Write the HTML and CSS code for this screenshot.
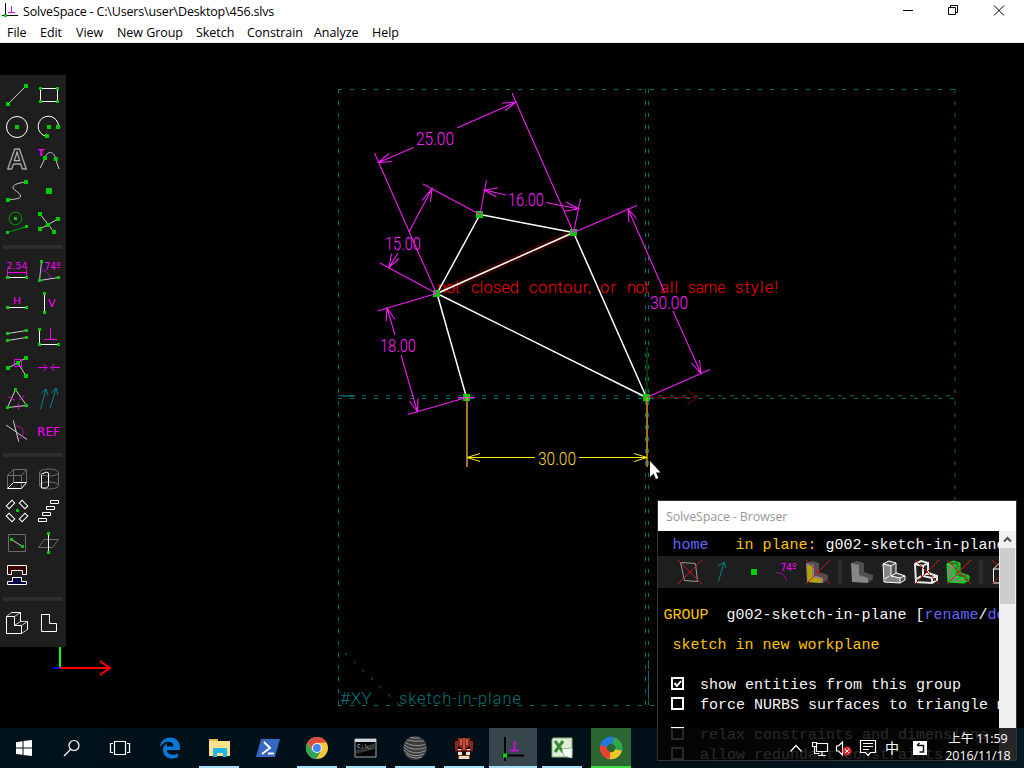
FILE: index.html
```html
<!DOCTYPE html>
<html lang="en">
<head>
<meta charset="utf-8">
<title>SolveSpace</title>
<link rel="stylesheet" href="styles.css">
</head>
<body>
<svg class="defs" width="0" height="0">
  <defs>
    <rect id="p" x="-1.5" y="-1.5" width="3" height="3" fill="#00cc00"/>
    <rect id="q" x="-2" y="-2" width="4" height="4" fill="#00cc00"/>
    <rect id="b" x="-3" y="-3" width="6" height="6" fill="#00cc00"/>
    <g id="solid">
      <path fill="#505050" d="M5 7l6-2 7 2v10l-5 2v-9zM13 19l5-3 9 3v4l-5 4v-4z"/>
      <path fill="#858585" d="M5 7l8 2v10l9 3v5l-16-1z"/>
    </g>
    <g id="edges" fill="none">
      <path d="M5 8l6-3 7 2v10l9 3v4l-5 3-16-1zM5 8l8 2v10l9 2v5M13 10l5-3M13 20l5-3M22 22l5-2M7 23l4-3"/>
    </g>
    <path id="x" d="M5 4l24 24M29 4l-24 24" stroke="#d41414" fill="none"/>
  </defs>
</svg>
<div class="screen">
  <header class="titlebar">
    <svg class="appicon" width="20" height="22" viewBox="0 0 20 22"><path d="M5.500 3v14M2 15.500h16" stroke="#000" fill="none"/><path d="M8 12.500h7M11.500 6v6" stroke="#e000e0" fill="none"/><rect x="4" y="14" width="3" height="3" fill="#00cc00"/></svg>
    <span class="title">SolveSpace - C:\Users\user\Desktop\456.slvs</span>
    <svg class="controls" width="124" height="22" viewBox="900 0 124 22"><path d="M903 10.500h10M948.500 7.500h7v7h-7zM950.500 7v-1.500h7v7h-1.500M994 5.500l10 10M1004 5.500l-10 10" fill="none" stroke="#000"/></svg>
  </header>
  <nav class="menubar">
    <span class="m1">File</span><span class="m2">Edit</span><span class="m3">View</span><span class="m4">New Group</span><span class="m5">Sketch</span><span class="m6">Constrain</span><span class="m7">Analyze</span><span class="m8">Help</span>
  </nav>
  <main class="work">
    <svg class="canvas" width="1024" height="685" viewBox="0 43 1024 685">
      <g class="plane">
        <path d="M338.500 89v617M645.500 89v617M648.500 89v617M955 89v617" stroke-dasharray="4 8"/>
        <path d="M338 89.500h617M338 705.500h617M338 395.800h308M338 398.500h617M646 395.800h309" stroke-dasharray="4 8"/>
        <path d="M345 653l54 52" stroke-dasharray="3 9"/>
        <path d="M342 396h13" stroke-width="1.500"/>
        <path d="M648.500 660v42" stroke-dasharray="7 4"/>
      </g>
      <g class="planetext">
        <text x="340" y="704" textLength="32" lengthAdjust="spacingAndGlyphs">#XY</text>
        <text x="399" y="704" textLength="122">sketch-in-plane</text>
      </g>
      <path d="M647 347v50" stroke="#004c00" stroke-width="1.500"/>
      <path d="M647 397.500h50M687 390.500l10 7-10 7" stroke="#780000" fill="none"/>
      <path d="M437 293.500L573.500 232.500" stroke="#300000" stroke-width="7"/>
      <g class="err">
        <text x="437" y="292.500" textLength="23">not</text>
        <text x="471" y="292.500" textLength="48">closed</text>
        <text x="529" y="292.500" textLength="62">contour,</text>
        <text x="600" y="292.500" textLength="16">or</text>
        <text x="627" y="292.500" textLength="22">not</text>
        <text x="660" y="292.500" textLength="18">all</text>
        <text x="688" y="292.500" textLength="37" lengthAdjust="spacingAndGlyphs">same</text>
        <text x="735" y="292.500" textLength="43">style!</text>
      </g>
      <path class="sketch" d="M466.500 397.500L437 293.500L480 214.500L573.500 232.500L437 293.500L646.500 397.500L573.500 232.500"/>
      <path fill="#00cc00" d="M463 394h7v7h-7zM433 290h7v7h-7zM476 211h7v7h-7zM570 229h7v7h-7zM643 394h7v7h-7z"/>
      <g class="dims">
        <path d="M436.500 293.500L374.500 153M573.500 232.500L512 93M378.500 162.500L413.500 147.500M457 128L516 102M389 153.500L378.500 162.500L392.500 161.500M502 103.300L516 102L505.500 110.500"/>
        <path d="M480 214.500L423 184M436.500 293.500L380 263M432 188.500L409 232M398 253L389 267.500M422 200.500L432 188.500L430.500 202M391.500 253.500L389 267.500L399 258.500"/>
        <path d="M480 214.500L486.500 180M573.500 232.500L580.500 199M484 190L506 195M546 202.500L579 209M498 188L484 190L496.500 197M566 202L579 209L564.500 211"/>
        <path d="M573.500 232.500L637 205.500M646.500 397.500L710 369.500M628 209L664.500 292M673 311L701 373.500M629 222.500L628 209L636.500 218.500M691.500 363L701 373.500L699.500 360"/>
        <path d="M436.500 293.500L377.500 311M466.500 397.500L407.500 414.500M387 308L395 335M401 355L417.500 412M386 321.500L387 308L395 319.500M409.500 401L417.500 412L418 398.500M458 397.500h17"/>
      </g>
      <g class="dimtext">
        <text x="416" y="144.500" textLength="38" lengthAdjust="spacingAndGlyphs">25.00</text>
        <text x="508" y="205.500" textLength="36" lengthAdjust="spacingAndGlyphs">16.00</text>
        <text x="385" y="249.500" textLength="36" lengthAdjust="spacingAndGlyphs">15.00</text>
        <text x="650" y="308.500" textLength="38" lengthAdjust="spacingAndGlyphs">30.00</text>
        <text x="380" y="351.500" textLength="36" lengthAdjust="spacingAndGlyphs">18.00</text>
        <text class="hot" x="538" y="464.500" textLength="38" lengthAdjust="spacingAndGlyphs">30.00</text>
      </g>
      <path d="M467 397v70M647 397v70" stroke="#d89830" stroke-width="1.500"/>
      <path d="M467 457.500h68M579 457.500h68M480 453.500l-13 4 13 4M634 453.500l13 4-13 4" stroke="#ffee00" fill="none"/>
      <path d="M60 647v21" stroke="#00ff00" stroke-width="2"/><path d="M53 668h7" stroke="#0000ff" stroke-width="2"/><path d="M60 668h50M100 661l10 7-10 7" stroke="#ff0000" stroke-width="2" fill="none"/>
      <path d="M650 461v16l3.500-3.500 2.500 5.500 2.500-1-2.500-5.500h4.500z" fill="#fff"/>
    </svg>

    <aside class="tools">
      <div class="grid">
        <svg class="i"><path class="w" d="M7 25L25 7"/><use href="#q" x="7" y="25"/><use href="#q" x="25" y="7"/></svg>
        <svg class="i"><path class="ww" d="M7.500 9.500h17v13h-17z"/><use href="#p" x="7.500" y="9.500"/><use href="#p" x="24.500" y="9.500"/><use href="#p" x="7.500" y="22.500"/><use href="#p" x="24.500" y="22.500"/></svg>
        <svg class="i"><circle class="ww" cx="16" cy="16" r="10.500"/><use href="#q" x="16" y="16"/></svg>
        <svg class="i"><path class="ww" d="M25.500 16A10.200 10.200 0 1 0 14 25.500"/><use href="#q" x="16" y="16"/><use href="#q" x="25" y="16"/><use href="#q" x="14" y="25"/></svg>
        <svg class="i"><text class="outline" x="6" y="26" textLength="20" lengthAdjust="spacingAndGlyphs">A</text></svg>
        <svg class="i"><path class="w" d="M7.300 25L12 15C14 7.500 21 7.500 22.700 16L26 26"/><text class="mt bold" x="5" y="13.300" font-size="9">T</text><use href="#q" x="12" y="15"/><use href="#q" x="22.700" y="16"/></svg>
        <svg class="i"><path class="w" d="M7 25C13 24 20 24 19.500 21C19 17 11 15 12 12C13 9 18 8 25 7"/><use href="#q" x="7" y="25"/><use href="#q" x="25" y="7"/></svg>
        <svg class="i"><use href="#b" x="16" y="16"/></svg>
        <svg class="i"><circle cx="14.500" cy="11.500" r="6.300" fill="none" stroke="#009c00"/><use href="#p" x="14.500" y="11.500"/><path d="M6.300 25.300L25.700 19.700" stroke="#009c00"/><use href="#p" x="6.500" y="25.500"/><use href="#p" x="25.500" y="19.500"/></svg>
        <svg class="i"><path class="w" d="M7 7L21 25M7 22L25 12"/><use href="#q" x="7" y="7"/><use href="#q" x="25" y="12"/><use href="#q" x="15" y="18"/><use href="#q" x="7" y="22"/><use href="#q" x="21" y="25"/></svg>
      </div>
      <div class="sep"></div>
      <div class="grid">
        <svg class="i"><text class="mt" x="5.500" y="13.500" font-size="9.500" textLength="21" lengthAdjust="spacingAndGlyphs">2.54</text><path class="m" d="M6.500 14.500v7M25.500 14.500v7M6.500 17.500h19"/><path class="ww" d="M6.500 22.500h19"/><use href="#p" x="6.500" y="22.500"/><use href="#p" x="25.500" y="22.500"/></svg>
        <svg class="i"><path class="w" d="M8.500 6.500L6.500 25.500L25.500 22.500"/><path class="m dk" d="M7.500 15.500Q15 15 17.700 23.300"/><text class="mt" x="11.500" y="14.500" font-size="10" textLength="16" lengthAdjust="spacingAndGlyphs">74º</text><use href="#p" x="8.500" y="6.500"/><use href="#p" x="6.500" y="25.500"/><use href="#p" x="25.500" y="22.500"/></svg>
        <svg class="i"><text class="mt" x="12" y="17" font-size="9.500" textLength="8" lengthAdjust="spacingAndGlyphs">H</text><path class="ww" d="M6.500 20.500h19"/><use href="#p" x="6.500" y="20.500"/><use href="#p" x="25.500" y="20.500"/></svg>
        <svg class="i"><text class="mt" x="15" y="20" font-size="11">V</text><path class="ww" d="M11.500 6.500v19"/><use href="#p" x="11.500" y="6.500"/><use href="#p" x="11.500" y="25.500"/></svg>
        <svg class="i"><path class="w" d="M6.500 14.500l19-3M6.500 21.500l19-3"/><use href="#p" x="6.500" y="14.500"/><use href="#p" x="25.500" y="11.500"/><use href="#p" x="6.500" y="21.500"/><use href="#p" x="25.500" y="18.500"/></svg>
        <svg class="i"><path class="ww" d="M6.500 10.500v15h19"/><path class="m" d="M11 20.500h13M17.500 9v11"/><use href="#p" x="6.500" y="10.500"/><use href="#p" x="6.500" y="25.500"/><use href="#p" x="25.500" y="25.500"/></svg>
        <svg class="i"><path class="w" d="M7 17L25 7M17 12L25 25"/><use href="#q" x="7" y="17"/><use href="#q" x="17" y="12"/><use href="#q" x="25" y="7"/><use href="#q" x="25" y="25"/><path class="m" d="M13.500 8.500h7v7h-7z"/></svg>
        <svg class="i"><path class="m" d="M5 16.500h9M10.500 13l3.500 3.500-3.500 3.500M27 16.500h-9M21.500 13l-3.500 3.500 3.500 3.500"/></svg>
        <svg class="i"><path class="w" d="M14.500 6.500L6.500 24.500L25.500 22.500Z"/><path class="m" d="M7.500 14l6 3M18.500 17l5-5M17 20.500l.500 6"/><use href="#p" x="14.500" y="6.500"/><use href="#p" x="6.500" y="24.500"/><use href="#p" x="25.500" y="22.500"/></svg>
        <svg class="i"><path class="t" d="M7.500 26.500L13 6M8.500 10l4.500-4 2 6M17 25.500L23 6M18.500 10l4.500-5 2 7"/></svg>
        <svg class="i"><path class="w" d="M5 10L26 24.500M12.300 5.300L17.700 26.700"/><path class="m dk" d="M15 11c10 0 8 13 3 12.500"/></svg>
        <svg class="i"><text class="mt" x="4" y="21" font-size="12" textLength="23" lengthAdjust="spacingAndGlyphs">REF</text></svg>
      </div>
      <div class="sep"></div>
      <div class="grid">
        <svg class="i"><path class="d" d="M6.500 25V12.500h14V25M6.500 12.500l6-6h13v13M12.500 6.500v13M20.500 12.500l5-6"/><path class="ww" d="M6.500 25.500h14l5-6h-13z"/></svg>
        <svg class="i"><ellipse class="d" cx="16" cy="9.500" rx="9.500" ry="3.500"/><path class="d" d="M6.500 9.500v13M25.500 9.500v13"/><ellipse class="d" cx="16" cy="22.500" rx="9.500" ry="3.500"/><path class="ww" d="M8.500 12v13h5l2-2V10l-2-1-5 2"/></svg>
        <svg class="i"><g class="ww"><rect x="5.500" y="7.500" width="8" height="4" transform="rotate(-45 9.500 9.500)"/><rect x="18.500" y="7.500" width="8" height="4" transform="rotate(45 22.500 9.500)"/><rect x="5.500" y="20.500" width="8" height="4" transform="rotate(45 9.500 22.500)"/><rect x="18.500" y="20.500" width="8" height="4" transform="rotate(-45 22.500 22.500)"/></g><use href="#p" x="16.500" y="15.500"/></svg>
        <svg class="i"><path class="ww" d="M17.500 5.500h8v3h-8zM13.500 11.500h8v3h-8zM9.500 17.500h8v3h-8zM5.500 23.500h8v3h-8z"/></svg>
        <svg class="i"><path class="d" d="M7.500 7.500h17v17h-17z"/><path class="w" d="M10.500 12.500L21.500 19.500"/><use href="#p" x="10.500" y="12.500"/><use href="#p" x="21.500" y="19.500"/></svg>
        <svg class="i"><path class="d" d="M5.500 20.500l6-8h14l-6 8z"/><path class="ww" d="M15.500 6.500v19"/><use href="#p" x="15.500" y="6.500"/><use href="#p" x="15.500" y="25.500"/></svg>
        <svg class="i"><path class="ww red" d="M6.500 6.500h19v9h-4v-4h-11v4h-4z"/><path class="ww blue" d="M6.500 25.500v-3h5v-4h9v4h5v3z"/></svg>
      </div>
      <div class="sep"></div>
      <div class="grid">
        <svg class="i"><path class="w" d="M5.500 9.500l5-4h9l-6 4M19.500 5.500v9l-6 4M19.500 14.500h7l-6 4M26.500 14.500v8l-6 4"/><path class="ww" d="M5.500 9.500h8v9h7v8h-15zM10.500 5.500h9v9M26.500 14.500v8"/></svg>
        <svg class="i"><path class="ww" d="M8.500 7.500h8v9h7v8h-15z"/></svg>
      </div>
    </aside>
  </main>

  <section class="browser">
    <div class="btitle">SolveSpace - Browser</div>
    <div class="bbody">
      <div class="bcontent">
        <div class="row home"> <i>home</i>   <b>in plane:</b> g002-sketch-in-plane</div>
        <div class="btools">
          <svg class="i"><path class="d lt" d="M7.500 6.500l15 1 2 18-13-1z"/><use href="#x"/></svg>
          <svg class="i"><path class="t" d="M13.500 25.500L19 6M13 10l6-4 2 6"/></svg>
          <svg class="i"><use href="#b" x="17" y="16"/></svg>
          <svg class="i"><text class="mt" x="11.500" y="15" font-size="10" textLength="16" lengthAdjust="spacingAndGlyphs">74º</text><path class="m dk" d="M7 16.500q9 .500 10.500 8"/></svg>
          <svg class="i"><use href="#solid"/><path fill="#b5a400" d="M6 10h5v11l9 2v4l-13-1z"/><use href="#x"/></svg>
          <div class="vsep"></div>
          <svg class="i"><use href="#solid"/></svg>
          <svg class="i"><use href="#solid"/><use href="#edges" stroke="#fff"/></svg>
          <svg class="i"><use href="#edges" stroke="#e8e8e8" stroke-width="2"/><use href="#x"/></svg>
          <svg class="i"><use href="#solid"/><path stroke="#00d000" d="M5 8l8 12M13 10L6 26M7 26l15-4M13 20l9 7M22 27l5-7M11 5l7 12M18 8l-5 11"/><use href="#edges" stroke="#00ee00"/><use href="#x"/></svg>
          <div class="vsep"></div>
          <svg class="i"><path class="ww" d="M6.500 13l5-5h12M6.500 13h12v14h-12z"/><path d="M5 4l24 24M29 4L5 28" stroke="#d41414"/></svg>
        </div>
        <div class="row group"><b>GROUP</b>  g002-sketch-in-plane [<i>rename</i>/<i>delete</i>]</div>
        <div class="row desc"> <b>sketch in new workplane</b></div>
        <div class="row opt"><svg class="box" width="13" height="13"><path d="M1 1h11v11H1z"/><path d="M3.500 6l2.500 3 4-5"/></svg><span>show entities from this group</span></div>
        <div class="row opt"><svg class="box" width="13" height="13"><path d="M1 1h11v11H1z"/></svg><span>force NURBS surfaces to triangle mesh</span></div>
        <div class="row opt late"><svg class="box" width="13" height="13"><path d="M1 1h11v11H1z"/></svg><span>relax constraints and dimensions</span></div>
        <div class="row opt"><svg class="box" width="13" height="13"><path d="M1 1h11v11H1z"/></svg><span>allow redundant constraints</span></div>
      </div>
      <div class="scroll"><svg width="17" height="17"><path d="M5 10.500l3.500-3.500 3.500 3.500" fill="none" stroke="#505050" stroke-width="2"/></svg><div class="thumb"></div></div>
    </div>
    <div class="shade"></div>
  </section>

  <footer class="taskbar">
    <div class="sys"><svg width="18" height="18"><path fill="#fff" d="M1 3.200l6.500-1v6.300H1zM8.500 2L17 1v7.500H8.500zM1 9.500h6.500v6.300L1 15zM8.500 9.500H17V17l-8.500-1z"/></svg></div>
    <div class="sys"><svg width="18" height="18"><circle cx="11" cy="6.500" r="5" class="ln"/><path class="ln" d="M7.500 10.500L1 17"/></svg></div>
    <div class="sys"><svg width="22" height="18"><path class="ln" d="M5.500 2.500h11v13h-11zM4 4.500H1.500v9H4M18 4.500h2.500v9H18"/></svg></div>
    <div class="apps">
      <div class="app"><svg width="22" height="22"><path fill="#0878d8" d="M1 10C2-2 20-3 21 10v3H8c0 5 7 6 11 3.500V20c-5 3-15 2-15-7 0-4 3-6 5-7-1 1-1.500 2-1.500 3.500h7C15 3 5 3 1 10z"/></svg></div>
      <div class="app on"><svg width="24" height="22"><path fill="#e5b84b" d="M2 2h9v4H2z"/><path fill="#ffe08a" d="M2 4h21v15H2z"/><path fill="#22b5ec" d="M6 11h14v9h-4v-4h-6v4H6z"/></svg></div>
      <div class="app"><svg width="24" height="22"><path fill="#3567c4" d="M5 2h19l-5 18H0z"/><path stroke="#fff" stroke-width="2" fill="none" d="M8 5l6 6-8 6M12 16.500h6"/></svg></div>
      <div class="app on"><svg width="22" height="22"><circle cx="11" cy="11" r="11" fill="#f4c63b"/><path fill="#dd4b3e" d="M1.500 5.500A11 11 0 0 1 20.500 5.500L11 6 6 12z"/><path fill="#2da35c" d="M1.500 5.500A11 11 0 0 0 10 22l5-8-9-1z"/><circle cx="11" cy="11" r="5" fill="#fff"/><circle cx="11" cy="11" r="4" fill="#4285f4"/></svg></div>
      <div class="app on"><svg width="23" height="20"><path fill="#050505" stroke="#a5a5a5" d="M1 1h21v18H1z"/><path fill="#cfd8e0" d="M1 1h21v3H1z"/><path fill="#333" d="M2 12L21 5v6L2 16z"/><text x="3" y="10" font-size="6" class="cmd">C:\_</text></svg></div>
      <div class="app on"><svg width="24" height="24"><circle cx="12" cy="12" r="12" fill="#3c3c3c"/><g fill="none" stroke="#aaa" stroke-width=".8"><path d="M4 4q7 2 17 1M2 6.500q9 5 20 2M1 9q9 7 22 2.500M1 11.500q9 9 22 3M1 14q8 9 20 4M3 18q7 6 16 3M7 1.500q5 1 10 .500"/></g></svg></div>
      <div class="app on"><svg width="20" height="23"><path fill="#8e2720" d="M1 1h18v21H1z"/><path fill="#111" d="M1 1h3v3H1zM16 1h3v3h-3zM4 9l4 2v1H4zM12 11l4-2v3h-4zM7 14h6v4H7zM1 14h3v8H1zM16 14h3v8h-3z"/><path fill="#eee0cc" d="M4 12h3v1H4zM13 12h3v1h-3zM4 15h4v3H4zM12 15h4v3h-4zM5 19h10v3H5z"/><path stroke="#e0a090" d="M7 2v6M13 2v6"/><path stroke="#c04a3c" stroke-width="2" d="M10 1v12"/></svg></div>
      <div class="app on active"><svg width="22" height="26"><path stroke="#000" stroke-width="2" d="M3 2v24M0 20.500h22"/><path stroke="#f000f0" stroke-width="1.500" d="M8 15.500h9M12.500 6v9"/><path fill="#00dd00" d="M1 18.500h4v4H1z"/></svg></div>
      <div class="app on"><svg width="23" height="22"><path fill="#e0eed9" stroke="#7cb870" d="M2 3q0-2 2-2h18v16q0 3-3 3H2z"/><path fill="none" stroke="#3a8c34" stroke-width="3" d="M5 4l8 11M13 4L5 15"/><path fill="#fff" stroke="#9bb89b" d="M12 12l10-1v10l-8-2z"/></svg></div>
      <div class="app on green"><svg width="24" height="24"><g fill="none" stroke-width="7"><path stroke="#2677de" d="M4.500 13A7.500 7.500 0 0 1 16 5.500"/><path stroke="#2fa84a" d="M14 4.800A7.500 7.500 0 0 1 19 16"/><path stroke="#f4c52a" d="M19.500 14A7.500 7.500 0 0 1 8 18.500"/><path stroke="#e54234" d="M11 19.500A7.500 7.500 0 0 1 4.600 10"/></g></svg></div>
    </div>
    <div class="tray">
      <svg width="150" height="40" viewBox="786 728 150 40"><path class="ln" d="M790.500 751.500l5.500-6 5.500 6M816.500 743.500h11v8h-11zM812.500 742.500h4v4h-4zM814.500 747v6.500h5M822 752v3M818 755.500h8M836.500 746v5h2l4 4v-13l-4 4zM860.500 740.500h15v12h-5l-2.500 3-2.500-3h-5zM863 743.500h10M863 746.500h10M863 749.500h6"/><circle cx="847" cy="751" r="4.500" fill="#dd2936"/><path stroke="#fff" d="M845 749l4 4M849 749l-4 4"/><text x="885" y="753" class="cjk">中</text><path fill="#fff" d="M913 741h14v14h-14z"/><path d="M917 745.500h6.500v6.500h-4M919.500 743l-2.500 2.500" fill="none" stroke="#111" stroke-width="1.500"/></svg>
      <div class="clock"><span>上午 11:59</span><span>2016/11/18</span></div>
    </div>
  </footer>
</div>
</body>
</html>
```
FILE: styles.css
```css
body { margin: 0; background: #000; }
.defs { position: absolute; }
.screen { position: relative; width: 1024px; height: 768px; overflow: hidden; display: flex; flex-direction: column; font-family: "Noto Sans", "Noto Sans CJK TC", sans-serif; font-size: 12.500px; }
.screen svg { display: block; flex: none; }
.titlebar { height: 22px; background: #fff; display: flex; align-items: center; color: #000; }
.title { margin-left: 3px; flex: 1; font-family: "Open Sans", sans-serif; letter-spacing: -0.170px; padding-top: 1px; }
.menubar { height: 20px; border-bottom: 1px solid #eee; background: #fff; display: flex; line-height: 22px; padding-left: 7px; white-space: nowrap; font-family: "Open Sans", sans-serif; letter-spacing: -0.050px; }
.m1 { width: 33px; } .m2 { width: 36px; } .m3 { width: 41px; } .m4 { width: 79px; }
.m5 { width: 51px; } .m6 { width: 67px; } .m7 { width: 58px; } .m8 { width: 30px; }
.work { position: relative; flex: 1; background: #000; padding-top: 32px; box-sizing: border-box; }
.canvas { position: absolute; left: 0; top: 0; }
.canvas text { font-family: Roboto, sans-serif; font-weight: 300; font-size: 16.500px; }
.canvas .dimtext text { font-size: 18px; }
.plane path { stroke: #007070; fill: none; }
.planetext text { fill: #007474; }
.err text { fill: #ff0000; }
.sketch { fill: none; stroke: #fff; stroke-width: 1.500; stroke-linejoin: round; }
.dims path { fill: none; stroke: #f41cf4; stroke-width: 1.100; }
.dimtext text { fill: #ff20ff; }
.dimtext .hot { fill: #ffd633; }

.tools { position: relative; width: 66px; height: 572px; box-sizing: border-box; background: #1e1e1e; padding: 4px 1px 0; }
.grid { display: grid; grid-template-columns: 32px 32px; grid-auto-rows: 32px; }
.sep { height: 4px; margin: 6px 2px; background: #2d2d2d; }
.i { width: 32px; height: 32px; fill: none; }
.w { stroke: #c8c8c8; fill: none; }
.ww { stroke: #fff; fill: none; }
.red { fill: #400000; }
.blue { fill: #000040; }
.m { stroke: #f000f0; fill: none; }
.m.dk { stroke: #a010a0; }
.d { stroke: #6c6c6c; fill: none; }
.d.lt { stroke: #999; }
.t { stroke: #008585; fill: none; }
.mt { fill: #ff00ff; font-family: "DejaVu Sans", sans-serif; }
.bold { font-weight: bold; }
.outline { fill: none; stroke: #c8c8c8; stroke-width: 1; font-family: "Liberation Sans", sans-serif; font-weight: bold; font-size: 29px; }

.browser { position: absolute; left: 657px; top: 500px; width: 358px; height: 259px; border: 1px solid #333; background: #000; z-index: 2; overflow: hidden; }
.btitle { height: 30px; line-height: 31px; background: #fff; color: #999; padding-left: 8px; font-family: "Open Sans", sans-serif; letter-spacing: -0.150px; }
.bbody { display: flex; height: 229px; }
.bcontent { width: 341px; overflow: hidden; color: #f5f5f5; font-family: "Liberation Mono", monospace; font-size: 15px; }
.row { white-space: pre; height: 20px; line-height: 23px; padding-left: 5.500px; display: block; }
.row i { color: #6464ff; font-style: normal; }
.row b { color: #ffc400; font-weight: normal; }
.home { padding-top: 3px; height: 22px; }
.btools { display: flex; background: #1e1e1e; height: 32px; padding-left: 15px; width: 380px; }
.vsep { width: 4px; margin: 0 4px 0 5px; background: #2d2d2d; height: 24px; align-self: center; flex: none; }
.group { margin-top: 16px; }
.desc { margin-top: 10px; margin-bottom: 20px; }
.opt { display: flex; align-items: flex-start; padding-left: 13px; }
.opt .box { margin: 3px 16px 0 0; fill: none; stroke: #fff; stroke-width: 2; }
.late { margin-top: 10px; }
.scroll { width: 17px; background: #f0f0f0; }
.thumb { height: 56px; margin: 0 1px; background: #cdcdcd; }
.shade { position: absolute; left: 0; right: 0; bottom: 0; height: 32px; background: rgba(6, 6, 6, 0.860); }

.taskbar { height: 40px; background: linear-gradient(90deg, #02121a, #000f18 65%, #051a24); display: flex; }
.sys { width: 48px; display: flex; align-items: center; justify-content: center; }
.apps { display: flex; margin-left: 1px; }
.app { width: 40px; margin: 0 4.500px; height: 40px; box-sizing: border-box; border-bottom: 2px solid transparent; padding-top: 2px; display: flex; align-items: center; justify-content: center; }
.app.on { border-bottom-color: #a6e0f8; }
.app.active { width: 48px; margin: 0 .500px; background: #37454c; }
.app.green { background: #2c6632; border-bottom-color: #3fdc3f; }
.ln { fill: none; stroke: #fff; stroke-width: 1.200; }
.cmd { fill: #ddd; font-family: "Liberation Mono", monospace; }
.tray { position: absolute; z-index: 3; left: 786px; top: 728px; width: 238px; height: 40px; display: flex; color: #fff; }
.cjk { fill: #fff; font-family: "Noto Sans CJK TC", sans-serif; font-size: 14px; }
.clock { width: 84px; display: flex; flex-direction: column; align-items: center; line-height: 17px; padding-top: 2px; font-family: "Open Sans", "Noto Sans CJK TC", sans-serif; font-size: 12.500px; letter-spacing: -0.100px; }
```
